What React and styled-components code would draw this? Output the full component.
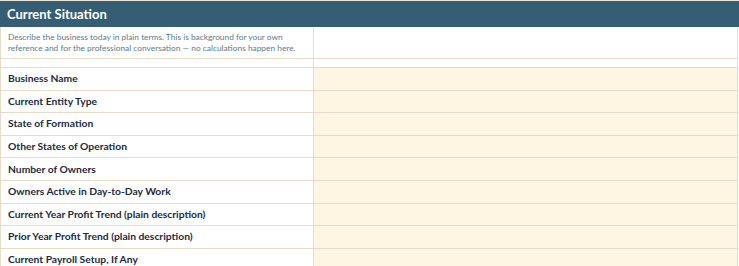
import React from "react";
import styled, { createGlobalStyle } from "styled-components";

const GlobalStyle = createGlobalStyle`
  body {
    margin: 0;
    background: #fff;
    font-family: "Lato", "Open Sans", Arial, sans-serif;
  }
`;

const Sheet = styled.div`
  width: 739px;
  border-top: 1px solid #efe3d3;
`;

const Header = styled.div`
  height: 26px;
  background: #355d73;
  color: #fff;
  font-weight: 700;
  font-size: 13px;
  display: flex;
  align-items: center;
  padding-left: 7px;
`;

const Table = styled.div`
  width: 738px;
  display: grid;
  grid-template-columns: 313px 1fr;
  border-left: 1px solid #eadbc7;
  border-right: 1px solid #eadbc7;
  box-sizing: border-box;
`;

const Cell = styled.div`
  box-sizing: border-box;
  height: ${({ h }) => h}px;
  border-bottom: 1px solid #eadbc7;
  border-right: ${({ left }) => (left ? "1px solid #eadbc7" : "none")};
  background: ${({ input }) => (input ? "#fef5e3" : "#fff")};
  display: flex;
  align-items: center;
  padding-left: 7px;
`;

const Note = styled.div`
  font-size: 8.35px;
  line-height: 11px;
  color: #5b7a8c;
`;

const Label = styled.div`
  font-size: 10.3px;
  font-weight: 700;
  color: #1c2a3f;
  margin-top: -1px;
`;

const fields = [
  "Business Name",
  "Current Entity Type",
  "State of Formation",
  "Other States of Operation",
  "Number of Owners",
  "Owners Active in Day-to-Day Work",
  "Current Year Profit Trend (plain description)",
  "Prior Year Profit Trend (plain description)",
  "Current Payroll Setup, If Any",
];

export default function App() {
  return (
    <Sheet>
      <GlobalStyle />
      <Header>Current Situation</Header>
      <Table>
        <Cell left h={32}>
          <Note>
            Describe the business today in plain terms. This is background for your own
            <br />
            reference and for the professional conversation — no calculations happen here.
          </Note>
        </Cell>
        <Cell h={32} />
        <Cell left h={9} />
        <Cell h={9} />
        {fields.map((f) => (
          <React.Fragment key={f}>
            <Cell left h={22.6}>
              <Label>{f}</Label>
            </Cell>
            <Cell input h={22.6} />
          </React.Fragment>
        ))}
      </Table>
    </Sheet>
  );
}
